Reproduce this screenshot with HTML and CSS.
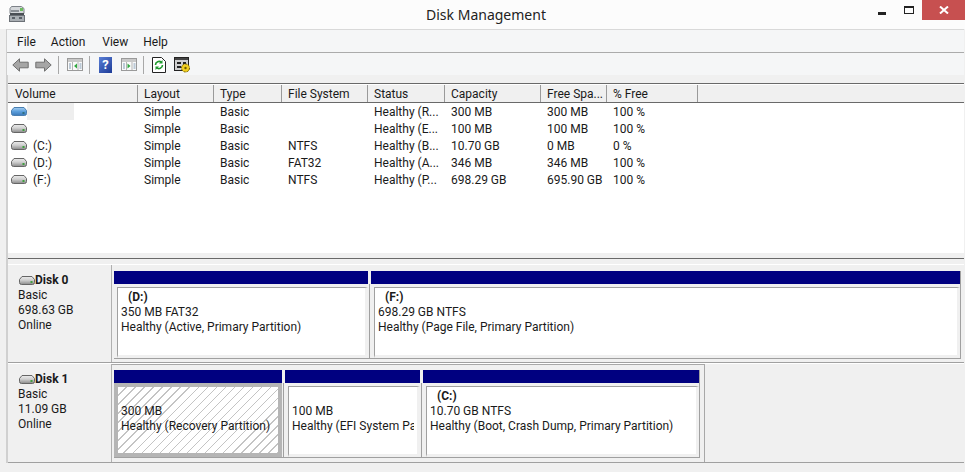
FILE: index.html
```html
<!DOCTYPE html>
<html lang="en">
<head>
    <meta charset="UTF-8">
    <title>Disk Management</title>
    <link rel="stylesheet" href="styles.css">
</head>
<body>
    <svg class="defs" width="0" height="0">
        <defs>
            <linearGradient id="driveGrey" x1="0" y1="0" x2="0" y2="1">
                <stop offset="0" stop-color="#ececec"/>
                <stop offset="0.45" stop-color="#d0d0d0"/>
                <stop offset="1" stop-color="#8a8a8a"/>
            </linearGradient>
            <linearGradient id="driveBlue" x1="0" y1="0" x2="0" y2="1">
                <stop offset="0" stop-color="#a8d0f2"/>
                <stop offset="0.5" stop-color="#5c9fdc"/>
                <stop offset="1" stop-color="#3a78b8"/>
            </linearGradient>
            <linearGradient id="helpBlue" x1="0" y1="0" x2="1" y2="1">
                <stop offset="0" stop-color="#5a7fd6"/>
                <stop offset="1" stop-color="#1c3a96"/>
            </linearGradient>
            <symbol id="drive" viewBox="0 0 16 9">
                <path d="M3 .5h10l2.500 3v3a2 2 0 0 1-2 2h-11a2 2 0 0 1-2-2v-3z" fill="url(#driveGrey)" stroke="#666"/>
                <rect x="11.500" y="5" width="2" height="2" fill="#3fa03f"/>
            </symbol>
            <symbol id="driveB" viewBox="0 0 16 9">
                <path d="M3 .5h10l2.500 3v3a2 2 0 0 1-2 2h-11a2 2 0 0 1-2-2v-3z" fill="url(#driveBlue)" stroke="#4a7fb0"/>
                <rect x="11.500" y="5" width="2" height="2" fill="#2f6f7f"/>
            </symbol>
            <symbol id="pane" viewBox="0 0 16 13">
                <rect x=".5" y=".5" width="15" height="12" fill="#fafafa" stroke="#9a9a9a"/>
                <rect x="1" y="1" width="14" height="3" fill="#c9c9c9"/>
                <path d="M5.500 4v8M11 4v8" stroke="#b5b5b5"/>
                <path d="M2 6h2M2 8h2M2 10h2M12.500 6h2M12.500 8h2M12.500 10h2" stroke="#7f9bb5"/>
            </symbol>
        </defs>
    </svg>

    <header class="titlebar">
        <svg class="app-icon" width="16" height="16" viewBox="0 0 16 16">
            <path d="M2.500 .5h10l2.500 2v5H1v-5z" fill="#d4d7da" stroke="#7d8288"/>
            <rect x="11" y="2" width="3" height="3" fill="#6cbb5e"/>
            <rect x="2" y="4" width="8" height="2" fill="#8b9096"/>
            <rect x="1" y="7" width="14" height="2" fill="#4a4f55"/>
            <rect x=".5" y="9.500" width="15" height="6" fill="#a9aeb3" stroke="#6c7177"/>
            <rect x="3" y="11" width="3" height="2" fill="#5a6068"/>
            <rect x="10" y="11" width="3" height="2" fill="#5a6068"/>
        </svg>
        <span class="title">Disk Management</span>
        <div class="window-buttons">
            <span class="btn-min"></span>
            <span class="btn-max"></span>
            <span class="btn-close">
                <svg width="10" height="8" viewBox="0 0 10 8"><path d="M1 .5l8 7M9 .5l-8 7" stroke="#fff" stroke-width="2"/></svg>
            </span>
        </div>
    </header>

    <div class="window">
        <nav class="menu">
            <span class="m-file">File</span>
            <span class="m-action">Action</span>
            <span class="m-view">View</span>
            <span class="m-help">Help</span>
        </nav>

        <div class="toolbar">
            <svg class="tool t-back" width="17" height="14" viewBox="0 0 17 14"><path d="M.8 7L7.500.8v3.400h8.700v5.600H7.500v3.400z" fill="#a6a6a6" stroke="#6f6f6f"/></svg>
            <svg class="tool t-fwd" width="17" height="14" viewBox="0 0 17 14"><path d="M16.200 7L9.500.8v3.400H.8v5.600h8.700v3.400z" fill="#a6a6a6" stroke="#6f6f6f"/></svg>
            <i class="sep s-1"></i>
            <svg class="tool t-tree" width="16" height="13" viewBox="0 0 16 13">
                <use href="#pane"/>
                <path d="M10 5.500v5L7 8z" fill="#2fa83f"/>
            </svg>
            <i class="sep s-2"></i>
            <span class="tool t-help">?</span>
            <svg class="tool t-show" width="16" height="13" viewBox="0 0 16 13">
                <use href="#pane"/>
                <path d="M6.500 5.500v5L9.500 8z" fill="#2fa83f"/>
            </svg>
            <i class="sep s-3"></i>
            <svg class="tool t-refresh" width="14" height="16" viewBox="0 0 14 16">
                <path d="M.5.5h9l4 4v11H.5z" fill="#fff" stroke="#222"/>
                <path d="M3.500 8a3.500 3.500 0 0 1 6-2.500" fill="none" stroke="#1f9a2e" stroke-width="1.600"/>
                <path d="M10.500 3v3.500H7z" fill="#1f9a2e"/>
                <path d="M10.500 8a3.500 3.500 0 0 1-6 2.500" fill="none" stroke="#1f9a2e" stroke-width="1.600"/>
                <path d="M3.500 13V9.500h3.500z" fill="#1f9a2e"/>
            </svg>
            <svg class="tool t-props" width="17" height="16" viewBox="0 0 17 16">
                <rect x=".5" y=".5" width="14" height="13" fill="#cfcfcf" stroke="#222"/>
                <rect x="1" y="1" width="13" height="2" fill="#444"/>
                <path d="M3 5h4v2H3zM3 9h4v2H3zM9 5h3v2H9z" fill="#222"/>
                <circle cx="11.500" cy="11" r="4" fill="#f2cf1f" stroke="#6d5a00" stroke-dasharray="2 1"/>
                <circle cx="11.500" cy="11" r="1.200" fill="#6d5a00"/>
            </svg>
        </div>

        <section class="list">
            <div class="list-row list-head">
                <span class="col c-vol">Volume</span>
                <span class="col c-lay">Layout</span>
                <span class="col c-typ">Type</span>
                <span class="col c-fs">File System</span>
                <span class="col c-sta">Status</span>
                <span class="col c-cap">Capacity</span>
                <span class="col c-fre">Free Spa...</span>
                <span class="col c-pct">% Free</span>
                <span class="col c-end"></span>
            </div>
            <div class="list-row">
                <span class="col c-vol"><svg class="vol-icon" width="16" height="9"><use href="#driveB"/></svg><span class="blanked"></span></span>
                <span class="col c-lay">Simple</span><span class="col c-typ">Basic</span><span class="col c-fs"></span>
                <span class="col c-sta">Healthy (R...</span><span class="col c-cap">300 MB</span><span class="col c-fre">300 MB</span><span class="col c-pct">100 %</span>
            </div>
            <div class="list-row">
                <span class="col c-vol"><svg class="vol-icon" width="16" height="9"><use href="#drive"/></svg></span>
                <span class="col c-lay">Simple</span><span class="col c-typ">Basic</span><span class="col c-fs"></span>
                <span class="col c-sta">Healthy (E...</span><span class="col c-cap">100 MB</span><span class="col c-fre">100 MB</span><span class="col c-pct">100 %</span>
            </div>
            <div class="list-row">
                <span class="col c-vol"><svg class="vol-icon" width="16" height="9"><use href="#drive"/></svg>(C:)</span>
                <span class="col c-lay">Simple</span><span class="col c-typ">Basic</span><span class="col c-fs">NTFS</span>
                <span class="col c-sta">Healthy (B...</span><span class="col c-cap">10.70 GB</span><span class="col c-fre">0 MB</span><span class="col c-pct">0 %</span>
            </div>
            <div class="list-row">
                <span class="col c-vol"><svg class="vol-icon" width="16" height="9"><use href="#drive"/></svg>(D:)</span>
                <span class="col c-lay">Simple</span><span class="col c-typ">Basic</span><span class="col c-fs">FAT32</span>
                <span class="col c-sta">Healthy (A...</span><span class="col c-cap">346 MB</span><span class="col c-fre">346 MB</span><span class="col c-pct">100 %</span>
            </div>
            <div class="list-row">
                <span class="col c-vol"><svg class="vol-icon" width="16" height="9"><use href="#drive"/></svg>(F:)</span>
                <span class="col c-lay">Simple</span><span class="col c-typ">Basic</span><span class="col c-fs">NTFS</span>
                <span class="col c-sta">Healthy (P...</span><span class="col c-cap">698.29 GB</span><span class="col c-fre">695.90 GB</span><span class="col c-pct">100 %</span>
            </div>
        </section>

        <section class="disks">
            <div class="disk disk-0">
                <div class="disk-info">
                    <div class="disk-name"><svg width="16" height="9"><use href="#drive"/></svg>Disk 0</div>
                    <div>Basic</div>
                    <div>698.63 GB</div>
                    <div>Online</div>
                </div>
                <div class="parts">
                    <div class="parts-row">
                        <div class="part p-d">
                            <div class="part-bar"></div>
                            <div class="part-body">
                                <b>(D:)</b>
                                <div>350 MB FAT32</div>
                                <div>Healthy (Active, Primary Partition)</div>
                            </div>
                        </div>
                        <div class="part p-f">
                            <div class="part-bar"></div>
                            <div class="part-body">
                                <b>(F:)</b>
                                <div>698.29 GB NTFS</div>
                                <div>Healthy (Page File, Primary Partition)</div>
                            </div>
                        </div>
                    </div>
                </div>
            </div>
            <div class="disk disk-1">
                <div class="disk-info">
                    <div class="disk-name"><svg width="16" height="9"><use href="#drive"/></svg>Disk 1</div>
                    <div>Basic</div>
                    <div>11.09 GB</div>
                    <div>Online</div>
                </div>
                <div class="parts">
                    <div class="parts-row">
                        <div class="part p-rec">
                            <div class="part-bar"></div>
                            <div class="part-body selected">
                                <b>&nbsp;</b>
                                <div>300 MB</div>
                                <div>Healthy (Recovery Partition)</div>
                            </div>
                        </div>
                        <div class="part p-efi">
                            <div class="part-bar"></div>
                            <div class="part-body">
                                <b>&nbsp;</b>
                                <div>100 MB</div>
                                <div>Healthy (EFI System Partition)</div>
                            </div>
                        </div>
                        <div class="part p-c">
                            <div class="part-bar"></div>
                            <div class="part-body">
                                <b>(C:)</b>
                                <div>10.70 GB NTFS</div>
                                <div>Healthy (Boot, Crash Dump, Primary Partition)</div>
                            </div>
                        </div>
                    </div>
                </div>
            </div>
        </section>
    </div>
</body>
</html>
```

FILE: styles.css
```css
html, body {
    margin: 0;
    height: 472px;
    overflow: hidden;
}
body {
    font-family: Roboto, "Noto Sans", sans-serif;
    font-size: 12px;
    line-height: 15px;
    color: #1a1a1a;
    background-color: #f0f0f0;
}
.defs {
    display: block;
    height: 0;
}

/* title bar */
.titlebar {
    height: 29px;
    background-color: #fcfcfc;
    display: flex;
    align-items: flex-start;
    position: relative;
}
.app-icon {
    margin: 6px 0 0 9px;
}
.title {
    position: absolute;
    left: 0;
    right: 0;
    top: 5px;
    text-align: center;
    font-family: "Noto Sans", sans-serif;
    font-size: 14px;
    line-height: 20px;
    color: #222;
    padding-left: 7px;
}
.window-buttons {
    margin-left: auto;
    display: flex;
    align-items: flex-start;
}
.btn-min {
    width: 8px;
    height: 3px;
    margin-top: 12px;
    background-color: #222;
}
.btn-max {
    width: 8px;
    height: 5px;
    margin: 6px 0 0 18px;
    border: 1px solid #222;
    border-top-width: 2px;
    box-sizing: content-box;
}
.btn-close {
    width: 43px;
    height: 20px;
    margin-left: 8px;
    background-color: #c75050;
    display: flex;
    align-items: center;
    justify-content: center;
}

/* window body */
.window {
    margin-left: 6px;
    border-left: 2px solid #d0d0d0;
    margin-right: 1px;
}
.menu {
    height: 22px;
    box-sizing: content-box;
    background-color: #f5f6f7;
    border-top: 1px solid #d9d9d9;
    border-bottom: 1px solid #ababab;
    display: flex;
    align-items: center;
    margin-left: -1px;
}
.menu span { padding-top: 2px; }
.m-file { margin-left: 10px; }
.m-action { margin-left: 15px; }
.m-view { margin-left: 17px; }
.m-help { margin-left: 15px; }
.toolbar {
    height: 22px;
    box-sizing: border-box;
    padding-top: 1px;
    background-color: #f5f6f7;
    display: flex;
    align-items: center;
    margin-left: -1px;
}
.tool { flex: none; }
.t-back { margin-left: 5px; }
.t-fwd { margin-left: 6px; }
.sep {
    width: 1px;
    height: 18px;
    background-color: #a8a8a8;
    flex: none;
}
.s-1 { margin-left: 6px; }
.t-tree { margin-left: 8px; }
.s-2 { margin-left: 6px; }
.t-help {
    margin-left: 9px;
    width: 13px;
    height: 16px;
    background-image: linear-gradient(135deg, #5a7fd6, #1c3a96);
    color: #fff;
    font-weight: bold;
    font-size: 13px;
    line-height: 16px;
    text-align: center;
}
.t-show { margin-left: 9px; }
.s-3 { margin-left: 6px; }
.t-refresh { margin-left: 8px; }
.t-props { margin-left: 8px; }

/* volume list */
.list {
    margin-top: 8px;
    height: 169px;
    background-color: #fff;
    border-top: 1px solid #696969;
    border-bottom: 5px solid #f0f0f0;
    box-shadow: 0 1px 0 #696969;
}
.list-row {
    display: flex;
    height: 17px;
    align-items: center;
    white-space: nowrap;
}
.list-head {
    background-color: #f0f0f0;
    border-bottom: 1px solid #696969;
    border-top: 1px solid #fff;
    box-sizing: border-box;
    height: 19px;
}
.col {
    flex: none;
    box-sizing: border-box;
    padding: 2px 0 0 6px;
    height: 100%;
    display: flex;
    align-items: center;
}
.list-head .col {
    border-right: 1px solid #9a9a9a;
}
.c-vol { width: 130px; padding: 2px 0 0 3px; }
.list-head .c-vol { padding-left: 7px; }
.c-lay { width: 76px; }
.c-typ { width: 68px; }
.c-fs { width: 86px; }
.c-sta { width: 77px; }
.c-cap { width: 96px; }
.c-fre { width: 66px; }
.c-pct { width: 91px; }
.list-head .c-end { flex: 1; border-right: none; }
.vol-icon { margin: -2px 6px 0 0; flex: none; }
.blanked {
    width: 47px;
    height: 17px;
    margin: -2px 0 0 -6px;
    background-color: #eeeeee;
}

/* disk rows */
.disks {
    margin-top: 6px;
}
.disk {
    display: flex;
    border-top: 1px solid #fff;
    border-bottom: 1px solid #a0a0a0;
    box-sizing: border-box;
}
.disk-0 { height: 99px; }
.disk-1 { height: 100px; }
.disk-info {
    width: 104px;
    padding: 8px 0 0 10px;
    box-sizing: border-box;
    border-right: 1px solid #b0b0b0;
    background-color: #f0f0f0;
    flex: none;
}
.disk-name {
    font-weight: bold;
    display: flex;
    align-items: center;
    margin-left: 1px;
}
.parts {
    padding: 6px 4px 0 2px;
    flex: none;
    height: 97px;
    box-sizing: border-box;
}
.disk-1 .parts {
    border-right: 1px solid #a8a8a8;
    border-top: 1px solid #a8a8a8;
    height: 98px;
    padding-top: 5px;
}
.parts-row {
    display: flex;
    gap: 3px;
    border-bottom: 1px solid #a0a0a0;
    border-right: 1px solid #a0a0a0;
}
.part {
    flex: none;
    position: relative;
}
.part + .part::before {
    content: "";
    position: absolute;
    left: -2px;
    top: 13px;
    bottom: 0;
    width: 1px;
    background-color: #a0a0a0;
}
.part-bar {
    height: 13px;
    background-color: #000080;
}
.part-body {
    height: 71px;
    margin: 3px 0 0 3px;
    box-sizing: border-box;
    padding: 1px 0 0 3px;
    background-color: #fff;
    border-top: 1px solid #a0a0a0;
    border-left: 1px solid #a0a0a0;
    border-right: 3px solid #f0f0f0;
    border-bottom: 3px solid #f0f0f0;
    white-space: nowrap;
    line-height: 15.500px;
}
.part-body b {
    display: block;
    margin: 1px 0 -1px 7px;
}
.part-body div {
    overflow: hidden;
    margin-right: 3px;
}
.selected {
    margin: 0;
    border: 4px solid #b5b5b5;
    padding: 1px 0 0 3px;
    height: 74px;
    background-image: repeating-linear-gradient(135deg, #fff 0 5.400px, #c4c4c4 5.400px 6.400px);
}
.p-d { width: 254px; }
.p-f { width: 589px; }
.p-rec { width: 168px; }
.p-efi { width: 135px; }
.p-c { width: 276px; }
```
